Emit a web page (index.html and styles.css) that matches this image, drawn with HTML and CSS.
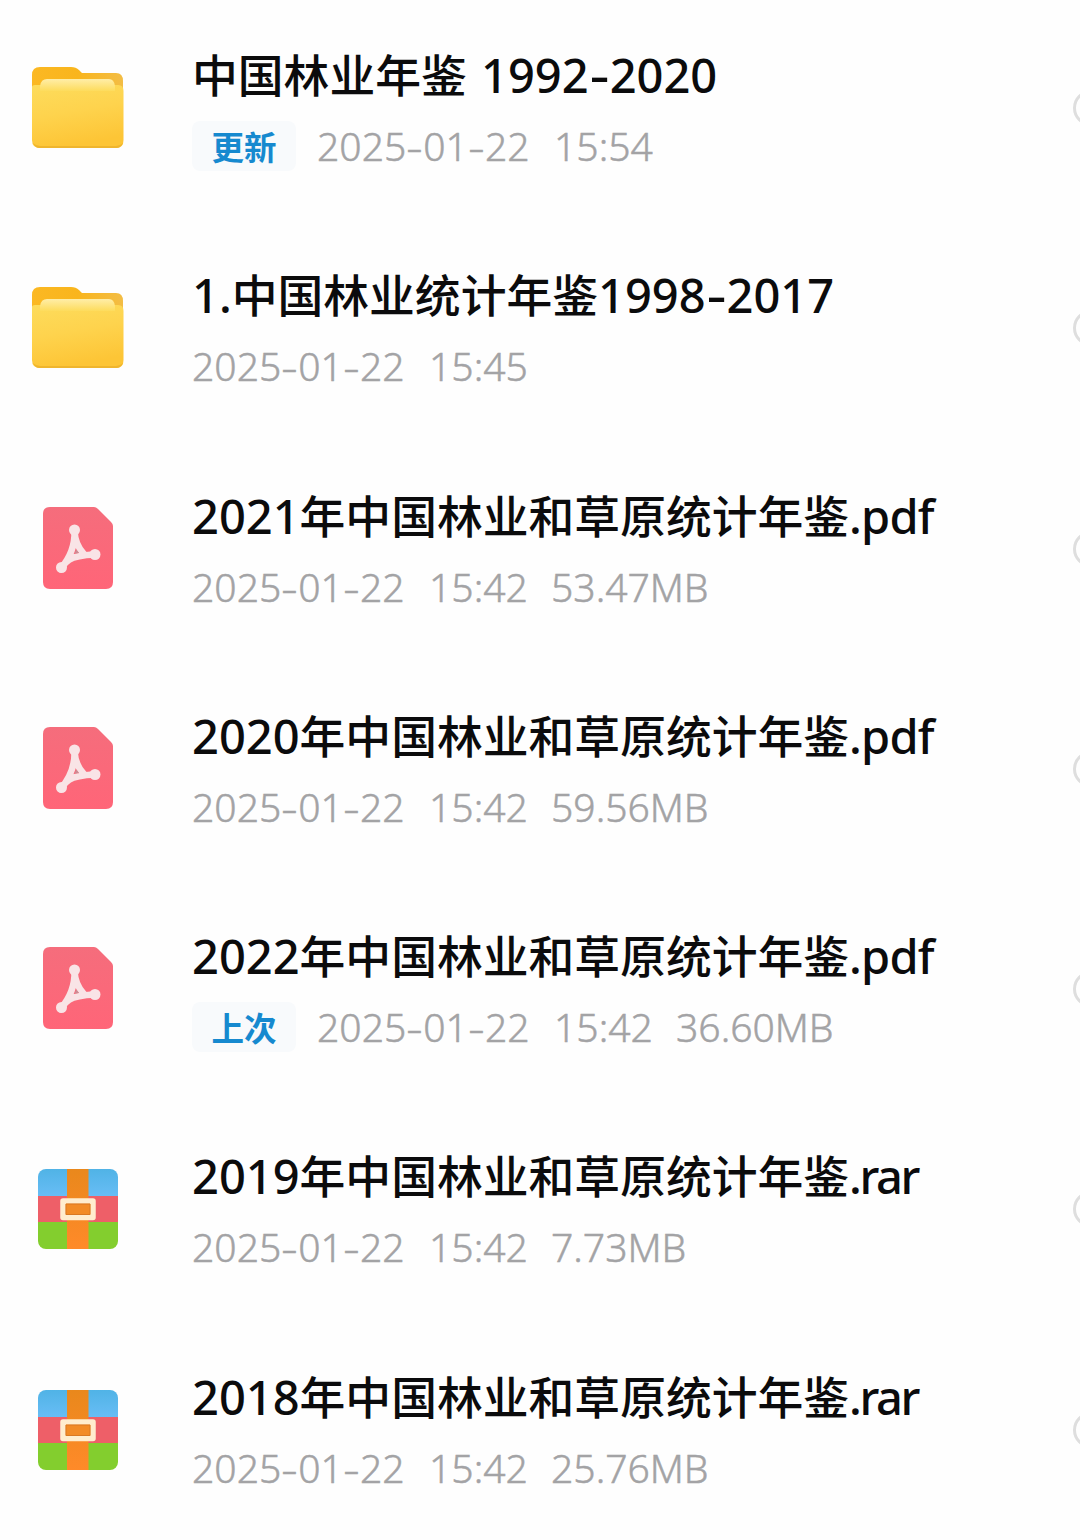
FILE: index.html
```html
<!DOCTYPE html>
<html lang="zh-CN">
<head>
    <meta charset="UTF-8">
    <meta name="viewport" content="width=device-width, initial-scale=1.0">
    <title>中国林业年鉴</title>
    <link rel="stylesheet" href="styles.css">
</head>
<body>
    <!-- Shared icons -->
    <svg class="icon-defs" aria-hidden="true">
        <defs>
            <linearGradient id="folderBack" x1="0" y1="0" x2="1" y2="0">
                <stop offset="0" stop-color="#fbb823"/>
                <stop offset="0.5" stop-color="#f9b51c"/>
                <stop offset="1" stop-color="#f3bd45"/>
            </linearGradient>
            <linearGradient id="folderFront" x1="0" y1="0" x2="0.25" y2="1">
                <stop offset="0" stop-color="#fddc5c"/>
                <stop offset="0.5" stop-color="#fed34d"/>
                <stop offset="1" stop-color="#fdc536"/>
            </linearGradient>
            <linearGradient id="folderPaper" x1="0" y1="0" x2="0" y2="1">
                <stop offset="0" stop-color="#ffeea8"/>
                <stop offset="1" stop-color="#fddc5c"/>
            </linearGradient>
            <linearGradient id="pdfBg" x1="0" y1="0" x2="0" y2="1">
                <stop offset="0" stop-color="#f56d7c"/>
                <stop offset="1" stop-color="#ff6578"/>
            </linearGradient>
            <linearGradient id="rarBlue" x1="0" y1="0" x2="0" y2="1">
                <stop offset="0" stop-color="#50b3e6"/>
                <stop offset="1" stop-color="#68bdf5"/>
            </linearGradient>
            <linearGradient id="rarBelt" x1="0" y1="0" x2="0" y2="1">
                <stop offset="0" stop-color="#e9881c"/>
                <stop offset="1" stop-color="#ff8a29"/>
            </linearGradient>
            <clipPath id="rarClip"><rect x="6" y="6" width="80" height="80" rx="8"/></clipPath>
        </defs>
        <symbol id="folder" viewBox="0 0 92 92">
            <path d="M0 13Q0 5 8 5H39Q44 5 47 8L50 11H84Q91 11 91 19V40H0Z" fill="url(#folderBack)"/>
            <path d="M0 25Q0 23 3 23H86Q91.500 23 91.500 29V78Q91.500 86 84 86H8Q0 86 0 78Z" fill="url(#folderFront)"/>
            <path d="M8 24Q9 17 15 17H77Q82 17 83 24V29H8Z" fill="url(#folderPaper)"/>
            <path d="M1 81Q3 86 8 86H84Q89 86 91 81Q88 84 84 84H8Q4 84 1 81Z" fill="#efb52d"/>
        </symbol>
        <symbol id="pdf" viewBox="0 1 92 92">
            <path d="M18 5H62Q64 5 66 7L79 20Q81 22 81 24V80Q81 87 74 87H18Q11 87 11 80V12Q11 5 18 5Z" fill="url(#pdfBg)"/>
            <path d="M42.500 29C43 39 47 47 52 52M63.500 52.500C52 53 41 55 37 58C32 61 31 65 28.500 67M42.500 29C43 42 38 56 28.500 67" fill="none" stroke="#f9e4e6" stroke-width="6.500" stroke-linecap="round" stroke-linejoin="round"/>
            <circle cx="42.500" cy="28" r="5.500" fill="#f9e4e6"/>
            <circle cx="63" cy="52.500" r="5.500" fill="#f9e4e6"/>
            <circle cx="29.500" cy="65.500" r="5.500" fill="#f9e4e6"/>
            <path d="M44.500 47.500L42.500 51.500L47 51Z" fill="#c98e95"/>
        </symbol>
        <symbol id="rar" viewBox="0 0 92 92">
            <g clip-path="url(#rarClip)">
                <rect x="6" y="6" width="80" height="27" fill="url(#rarBlue)"/>
                <rect x="6" y="33" width="80" height="26" fill="#ee5f68"/>
                <rect x="6" y="59" width="80" height="27" fill="#83ce2e"/>
                <rect x="35" y="6" width="21.500" height="80" fill="url(#rarBelt)"/>
            </g>
            <path d="M31 38H61V54.500H31Z" fill="#f28b26" stroke="#ffedce" stroke-width="5.500" stroke-linejoin="round"/>
            <path d="M34 41H58V51.500H34Z" fill="none" stroke="#d97922" stroke-width="1"/>
        </symbol>
    </svg>

    <ul class="file-list">
        <li class="file-row">
            <svg class="file-icon"><use href="#folder"/></svg>
            <div class="file-info">
                <h2 class="file-name">中国林业年鉴 <span class="latin spaced">1992<i class="dash">-</i>2020</span></h2>
                <p class="file-meta"><span class="tag">更新</span><span class="date">2025<i class="dash">-</i>01<i class="dash">-</i>22</span><span class="time">15:54</span></p>
            </div>
            <span class="check"></span>
        </li>
        <li class="file-row">
            <svg class="file-icon"><use href="#folder"/></svg>
            <div class="file-info">
                <h2 class="file-name"><span class="latin">1.</span>中国林业统计年鉴<span class="latin">1998<i class="dash">-</i>2017</span></h2>
                <p class="file-meta"><span class="date">2025<i class="dash">-</i>01<i class="dash">-</i>22</span><span class="time">15:45</span></p>
            </div>
            <span class="check"></span>
        </li>
        <li class="file-row">
            <svg class="file-icon"><use href="#pdf"/></svg>
            <div class="file-info">
                <h2 class="file-name"><span class="latin">2021</span>年中国林业和草原统计年鉴<span class="ext">.pdf</span></h2>
                <p class="file-meta"><span class="date">2025<i class="dash">-</i>01<i class="dash">-</i>22</span><span class="time">15:42</span><span class="size">53.47MB</span></p>
            </div>
            <span class="check"></span>
        </li>
        <li class="file-row">
            <svg class="file-icon"><use href="#pdf"/></svg>
            <div class="file-info">
                <h2 class="file-name"><span class="latin">2020</span>年中国林业和草原统计年鉴<span class="ext">.pdf</span></h2>
                <p class="file-meta"><span class="date">2025<i class="dash">-</i>01<i class="dash">-</i>22</span><span class="time">15:42</span><span class="size">59.56MB</span></p>
            </div>
            <span class="check"></span>
        </li>
        <li class="file-row">
            <svg class="file-icon"><use href="#pdf"/></svg>
            <div class="file-info">
                <h2 class="file-name"><span class="latin">2022</span>年中国林业和草原统计年鉴<span class="ext">.pdf</span></h2>
                <p class="file-meta"><span class="tag">上次</span><span class="date">2025<i class="dash">-</i>01<i class="dash">-</i>22</span><span class="time">15:42</span><span class="size">36.60MB</span></p>
            </div>
            <span class="check"></span>
        </li>
        <li class="file-row">
            <svg class="file-icon"><use href="#rar"/></svg>
            <div class="file-info">
                <h2 class="file-name"><span class="latin">2019</span>年中国林业和草原统计年鉴<span class="ext ext-rar">.rar</span></h2>
                <p class="file-meta"><span class="date">2025<i class="dash">-</i>01<i class="dash">-</i>22</span><span class="time">15:42</span><span class="size">7.73MB</span></p>
            </div>
            <span class="check"></span>
        </li>
        <li class="file-row">
            <svg class="file-icon"><use href="#rar"/></svg>
            <div class="file-info">
                <h2 class="file-name"><span class="latin">2018</span>年中国林业和草原统计年鉴<span class="ext ext-rar">.rar</span></h2>
                <p class="file-meta"><span class="date">2025<i class="dash">-</i>01<i class="dash">-</i>22</span><span class="time">15:42</span><span class="size">25.76MB</span></p>
            </div>
            <span class="check"></span>
        </li>
    </ul>
</body>
</html>
```
FILE: styles.css
```css
/* Reset */
* {
    margin: 0;
    padding: 0;
    box-sizing: border-box;
}

body {
    width: 1080px;
    height: 1540px;
    overflow: hidden;
    background: #fefefe;
    font-family: "Noto Sans", "Noto Sans CJK SC", sans-serif;
}

.icon-defs {
    display: block;
    width: 0;
    height: 0;
}

/* File list */
.file-list {
    list-style: none;
}

.file-row {
    display: flex;
    align-items: flex-start;
    height: 220.3px;
    padding-left: 32px;
}

.file-icon {
    flex: none;
    width: 92px;
    height: 92px;
    margin-top: 62px;
}

.file-info {
    flex: none;
    width: 881px;
    margin-top: 38px;
    padding-left: 68px;
}

/* Title line */
.file-name {
    height: 73px;
    line-height: 70px;
    font-family: "Noto Sans CJK SC", sans-serif;
    font-size: 45.8px;
    font-weight: 500;
    color: #0b0b0c;
    white-space: nowrap;
}

.latin,
.ext {
    font-family: "Noto Sans", sans-serif;
    font-size: 47px;
}

.spaced {
    margin-left: 4px;
}

.ext {
    letter-spacing: -0.8px;
}

.ext-rar {
    letter-spacing: -2.4px;
}

.dash {
    display: inline-block;
    font-style: normal;
    text-align: center;
    transform: scaleX(1.3);
}

.latin .dash {
    width: 21px;
}

/* Date, time and size */
.file-meta {
    display: flex;
    align-items: center;
    height: 70px;
    line-height: 70px;
    font-size: 39.1px;
    font-weight: 300;
    color: #a3a3a5;
    white-space: nowrap;
    -webkit-text-stroke: 0.5px #a3a3a5;
}

.file-meta .dash {
    width: 17px;
}

.date {
    width: 237px;
}

.time {
    width: 122px;
}

.tag {
    width: 104px;
    height: 50px;
    margin-right: 21px;
    border-radius: 8px;
    background: #f8fafc;
    font-family: "Noto Sans CJK SC", sans-serif;
    font-size: 32.5px;
    font-weight: 700;
    line-height: 50px;
    text-align: center;
    color: #1689cf;
    -webkit-text-stroke: 0;
}

/* Selection circle, cut by the right edge */
.check {
    flex: none;
    width: 36px;
    height: 36px;
    margin-top: 90px;
    margin-left: 68px;
    border: 3px solid #dedede;
    border-radius: 50%;
}
```
